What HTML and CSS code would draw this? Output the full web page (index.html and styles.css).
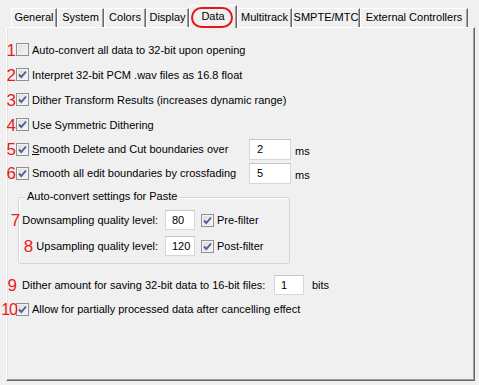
FILE: index.html
```html
<!DOCTYPE html>
<html lang="en">

<head>
 <meta charset="UTF-8">
 <title>Preferences - Data</title>
 <link rel="stylesheet" href="styles.css">
</head>

<body>
 <div class="tabs">
  <span class="tab t-general">General</span>
  <span class="tab t-system">System</span>
  <span class="tab t-colors">Colors</span>
  <span class="tab t-display">Display</span>
  <span class="tab t-data active">Data<span class="ring"></span></span>
  <span class="tab t-multi">Multitrack</span>
  <span class="tab t-smpte">SMPTE/MTC</span>
  <span class="tab t-ext">External Controllers</span>
 </div>

 <div class="panel">
  <div class="row r25">
   <span class="check"><span class="num">1</span></span>
   <span class="label">Auto-convert all data to 32-bit upon opening</span>
  </div>
  <div class="row r25">
   <span class="check on"><span class="num">2</span><svg viewBox="0 0 11 11"><path d="M2 5.5 L4.3 8 L9 2.5" /></svg></span>
   <span class="label">Interpret 32-bit PCM .wav files as 16.8 float</span>
  </div>
  <div class="row r25">
   <span class="check on"><span class="num">3</span><svg viewBox="0 0 11 11"><path d="M2 5.5 L4.3 8 L9 2.5" /></svg></span>
   <span class="label">Dither Transform Results (increases dynamic range)</span>
  </div>
  <div class="row r25">
   <span class="check on"><span class="num">4</span><svg viewBox="0 0 11 11"><path d="M2 5.5 L4.3 8 L9 2.5" /></svg></span>
   <span class="label">Use Symmetric Dithering</span>
  </div>
  <div class="row r24">
   <span class="check on"><span class="num">5</span><svg viewBox="0 0 11 11"><path d="M2 5.5 L4.3 8 L9 2.5" /></svg></span>
   <span class="label wide"><u>S</u>mooth Delete and Cut boundaries over</span>
   <span class="field ms">2</span>
   <span class="unit">ms</span>
  </div>
  <div class="row r24">
   <span class="check on"><span class="num">6</span><svg viewBox="0 0 11 11"><path d="M2 5.5 L4.3 8 L9 2.5" /></svg></span>
   <span class="label wide">Smooth all edit boundaries by crossfading</span>
   <span class="field ms">5</span>
   <span class="unit">ms</span>
  </div>

  <div class="group">
   <span class="legend">Auto-convert settings for Paste</span>
   <div class="grow">
    <span class="glabel"><span class="gtext"><span class="num">7</span>Downsampling quality level:</span></span>
    <span class="field small">80</span>
    <span class="check on"><svg viewBox="0 0 11 11"><path d="M2 5.5 L4.3 8 L9 2.5" /></svg></span>
    <span class="label">Pre-filter</span>
   </div>
   <div class="grow">
    <span class="glabel"><span class="gtext"><span class="num n8">8</span>Upsampling quality level:</span></span>
    <span class="field small">120</span>
    <span class="check on"><svg viewBox="0 0 11 11"><path d="M2 5.5 L4.3 8 L9 2.5" /></svg></span>
    <span class="label">Post-filter</span>
   </div>
  </div>

  <div class="row r24 after-group">
   <span class="plain"><span class="num n9">9</span>Dither amount for saving 32-bit data to 16-bit files:</span>
   <span class="field small">1</span>
   <span class="unit bits">bits</span>
  </div>
  <div class="row r24">
   <span class="check on"><span class="num n10">10</span><svg viewBox="0 0 11 11"><path d="M2 5.5 L4.3 8 L9 2.5" /></svg></span>
   <span class="label">Allow for partially processed data after cancelling effect</span>
  </div>
 </div>
</body>

</html>
```

FILE: styles.css
```css
body {
 margin: 0;
 background-color: #f0f0f0;
 font-family: 'Liberation Sans', Arial, sans-serif;
 font-size: 11px;
 color: #000;
}

/* tab strip */
.tabs {
 display: flex;
 align-items: flex-end;
 height: 27px;
 padding-left: 11px;
}

.tab {
 position: relative;
 box-sizing: border-box;
 height: 19px;
 line-height: 17px;
 text-align: center;
 border-top: 1px solid #fff;
 border-left: 1px solid #fff;
 border-right: 1px solid #696969;
 box-shadow: inset -1px 0 0 #a0a0a0;
 white-space: nowrap;
}

.t-general { width: 46px; }
.t-system { width: 47px; }
.t-colors { width: 42px; }
.t-display { width: 43px; }
.t-data { width: 48px; }
.t-multi { width: 55px; }
.t-smpte { width: 68px; }
.t-ext { width: 108px; }

.tab.active {
 height: 23px;
 line-height: 20px;
 margin-bottom: -1px;
 background-color: #f0f0f0;
 z-index: 1;
}

.ring {
 position: absolute;
 left: 1px;
 top: 1px;
 width: 42px;
 height: 21px;
 box-sizing: border-box;
 border: 2px solid #e8141c;
 border-radius: 11px;
}

/* page body */
.panel {
 box-sizing: border-box;
 margin-left: 6px;
 width: 469px;
 height: 354px;
 padding-top: 9px;
 border-top: 1px solid #fff;
 border-left: 1px solid #fff;
 border-right: 1px solid #696969;
 border-bottom: 1px solid #696969;
 box-shadow: inset -1px -1px 0 #a0a0a0, inset 1px 0 0 #e3e3e3;
}

.row {
 display: flex;
 align-items: center;
 padding-left: 9px;
}

.r25 { height: 25px; }
.r24 { height: 24px; }

.check {
 position: relative;
 flex: none;
 box-sizing: border-box;
 width: 13px;
 height: 13px;
 border: 1px solid #8f8f8f;
 background: linear-gradient(135deg, #dcdcdc, #f6f6f6);
 box-shadow: inset 0 0 0 1px #f4f4f4;
}

.check svg {
 position: absolute;
 left: 0;
 top: 0;
 width: 11px;
 height: 11px;
}

.check svg path {
 fill: none;
 stroke: #4c5e96;
 stroke-width: 1.9;
}

.num {
 position: absolute;
 right: 100%;
 top: 50%;
 transform: translateY(-50%);
 margin-right: 1px;
 font-size: 17px;
 line-height: 17px;
 color: #ea1a1a;
 white-space: nowrap;
}

.num.n10 {
 margin-right: 0;
 font-size: 16px;
 letter-spacing: -1px;
}

.label {
 margin-left: 3px;
 white-space: nowrap;
}

.label.wide {
 width: 217px;
}

.field {
 box-sizing: border-box;
 height: 21px;
 line-height: 19px;
 padding-left: 7px;
 background-color: #fff;
 border: 1px solid #d7d7d7;
 border-top-color: #c5c5c5;
}

.field.ms { width: 42px; }
.field.small { width: 30px; height: 20px; line-height: 18px; padding-left: 6px; }

.unit {
 margin-left: 4px;
 margin-top: 4px;
}

.unit.bits { margin-left: 8px; margin-top: 0; }

/* group box */
.group {
 box-sizing: border-box;
 margin: 12px 0 0 11px;
 width: 272px;
 padding-bottom: 4px;
 border: 1px solid #d5d5d5;
 border-radius: 3px;
 box-shadow: inset 1px 1px 0 #fff;
}

.legend {
 display: table;
 margin: -9px 0 0 6px;
 padding: 0 2px;
 line-height: 14px;
 background-color: #f0f0f0;
}

.grow {
 display: flex;
 align-items: center;
 height: 26px;
}

.grow:first-of-type { margin-top: 4px; }

.glabel {
 display: flex;
 justify-content: flex-end;
 width: 139px;
 flex: none;
}

.gtext {
 position: relative;
 white-space: nowrap;
}

.gtext .num { margin-right: 2px; }
.gtext .n8 { margin-right: 3px; }

.grow .field { margin-left: 7px; }
.grow .check { margin-left: 6px; }

.after-group { margin-top: 9px; padding-left: 15px; }

.plain {
 position: relative;
 width: 252px;
 white-space: nowrap;
}

.plain .n9 { margin-right: 5px; }
```
